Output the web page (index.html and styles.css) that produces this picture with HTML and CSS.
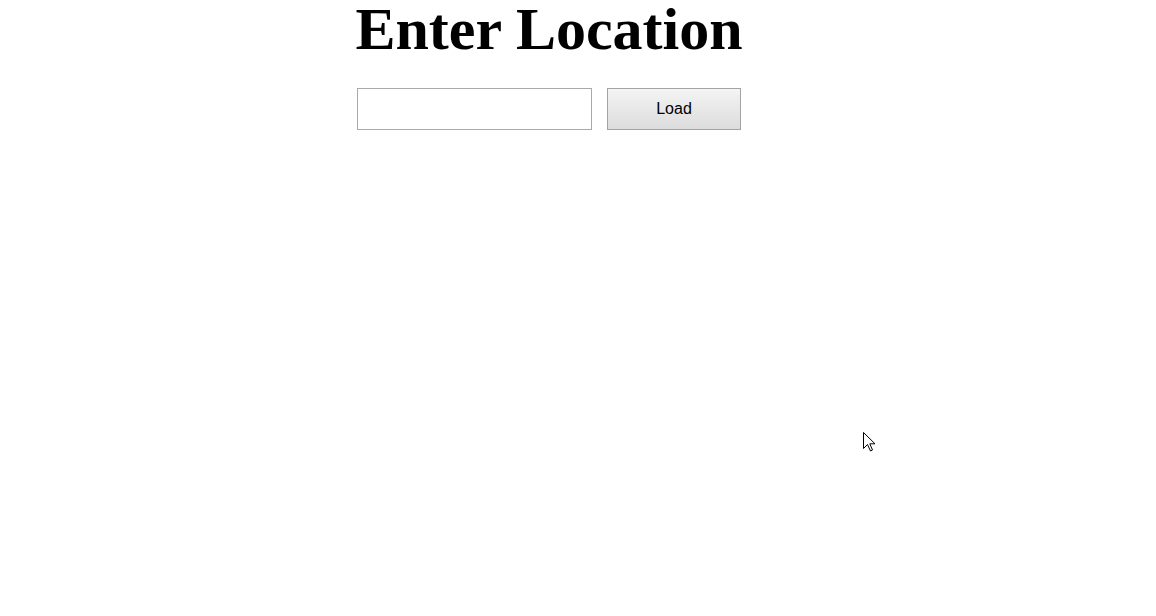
FILE: index.html
```html
<!DOCTYPE html>
<html>
<head>
<meta charset="utf-8">
<link rel="stylesheet" href="styles.css">
</head>
<body>
<div class="page">
  <h1 class="title">Enter Location</h1>
  <div class="row">
    <input class="field" type="text">
    <button class="btn">Load</button>
  </div>
</div>
<svg class="cursor" width="13" height="20" viewBox="0 0 13 20">
  <path d="M0.5 0.5 L0.5 16.5 L4.5 12.5 L7.5 19 L9.5 18 L6.8 11.8 L12 11.8 Z" fill="#fff" stroke="#000" stroke-width="1" stroke-linejoin="miter"/>
</svg>
</body>
</html>
```

FILE: styles.css
```css
html, body {
  margin: 0;
  padding: 0;
  background: #fff;
}
.page {
  width: 1098px;
  display: flex;
  flex-direction: column;
  align-items: center;
}
.title {
  margin: 0;
  font-family: "Liberation Serif", "Times New Roman", serif;
  font-weight: bold;
  font-size: 60px;
  line-height: 59px;
  color: #000;
}
.row {
  margin-top: 29px;
  display: flex;
  gap: 15px;
}
.field {
  box-sizing: border-box;
  width: 235px;
  height: 42px;
  margin: 0;
  border: 1px solid #a9a9a9;
  background: #fff;
  padding: 0 4px;
  font-family: "Liberation Sans", Arial, sans-serif;
  font-size: 16px;
}
.btn {
  box-sizing: border-box;
  width: 134px;
  height: 42px;
  margin: 0;
  border: 1px solid #a3a3a3;
  border-radius: 0;
  background: linear-gradient(#f4f4f4, #dcdcdc);
  font-family: "Liberation Sans", Arial, sans-serif;
  font-size: 16px;
  color: #000;
}
.cursor {
  position: absolute;
  left: 863px;
  top: 432px;
}
```
